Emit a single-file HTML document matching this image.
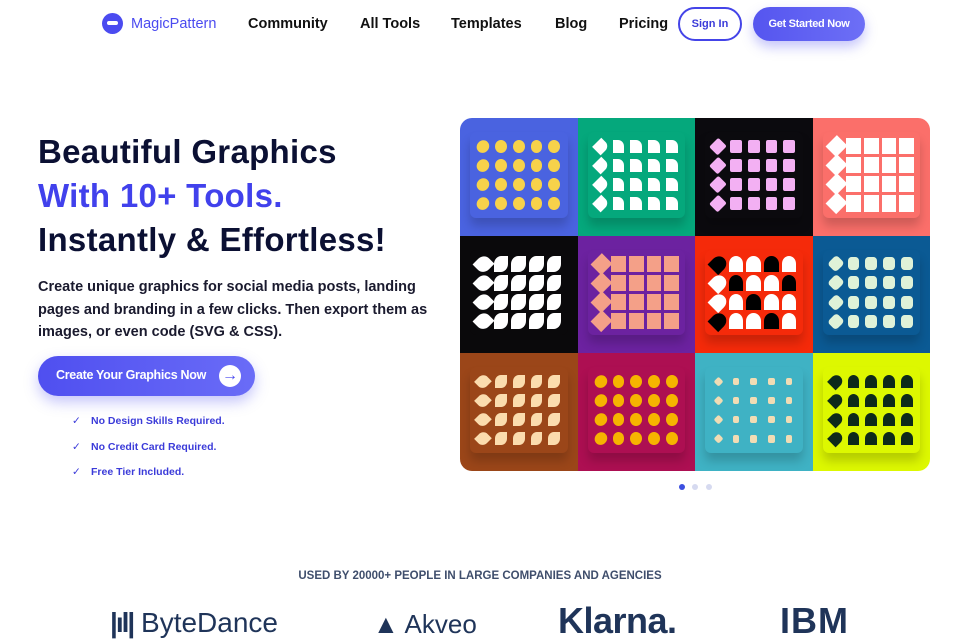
<!DOCTYPE html>
<html><head><meta charset="utf-8"><style>
*{margin:0;padding:0;box-sizing:border-box}
body{width:960px;height:640px;overflow:hidden;background:#fff;font-family:"Liberation Sans",sans-serif;position:relative;color:#0d0c22}
.a{position:absolute}
.nav{font-weight:bold;font-size:14.5px;top:16px;color:#111}
h1{position:absolute;left:38px;top:130px;font-size:33px;line-height:44px;font-weight:bold;color:#0b1033;letter-spacing:.3px}
.p{left:38px;top:276px;width:390px;font-size:14.5px;line-height:22.5px;font-weight:bold;color:#1a1a2e}
.cta{left:38px;top:356px;width:217px;height:40px;border-radius:20px;background:linear-gradient(90deg,#4f4ff0,#6a6cf7);box-shadow:0 6px 14px rgba(90,90,240,.35);color:#fff;font-weight:bold;font-size:12.5px;padding:12px 0 0 18px;letter-spacing:-.3px}
.chk{left:72px;font-size:10.5px;color:#3b3bd9;font-weight:bold}
.chk span{display:inline-block;width:19px;font-weight:normal}
.grid{left:460px;top:118px;width:470px;height:353px;border-radius:12px;overflow:hidden;display:grid;grid-template-columns:repeat(4,1fr);grid-template-rows:repeat(3,1fr)}
.c{position:relative}
.in{position:absolute;left:10px;top:14px;right:10px;bottom:18px;border-radius:6px;box-shadow:0 8px 10px rgba(0,0,0,.18);display:grid;grid-template-columns:repeat(5,1fr);grid-template-rows:repeat(4,1fr);gap:3px;padding:6px}
.in i{display:block}
.logo{font-size:28px;color:#1f3459;top:607px}
</style></head><body>
<div class="a" style="left:102px;top:13px;width:21px;height:21px;border-radius:50%;background:#4b4bf0"></div>
<div class="a" style="left:107px;top:21px;width:11px;height:4px;background:#fff;border-radius:2px"></div>
<div class="a" style="left:131px;top:16px;font-size:14.5px;color:#4b4bf0">MagicPattern</div>
<div class="a nav" style="left:248px">Community</div>
<div class="a nav" style="left:360px">All Tools</div>
<div class="a nav" style="left:451px">Templates</div>
<div class="a nav" style="left:555px">Blog</div>
<div class="a nav" style="left:619px">Pricing</div>
<div class="a" style="left:678px;top:7px;width:64px;height:34px;border:2px solid #4444e8;border-radius:17px;color:#3b3bd9;font-size:11px;font-weight:bold;text-align:center;line-height:30px">Sign In</div>
<div class="a" style="left:753px;top:7px;width:112px;height:34px;border-radius:17px;background:linear-gradient(90deg,#5555ef,#6d6ff6);box-shadow:0 6px 12px rgba(90,90,240,.35);color:#fff;font-size:11px;font-weight:bold;text-align:center;line-height:34px;letter-spacing:-.3px">Get Started Now</div>

<h1>Beautiful Graphics<br><span style="color:#4141ec">With 10+ Tools.</span><br>Instantly &amp; Effortless!</h1>
<div class="a p">Create unique graphics for social media posts, landing pages and branding in a few clicks. Then export them as images, or even code (SVG &amp; CSS).</div>
<div class="a cta">Create Your Graphics Now</div>
<div class="a" style="left:219px;top:365px;width:22px;height:22px;border-radius:50%;background:#fff;color:#4a4af0;font-size:16px;font-weight:bold;text-align:center;line-height:21px">→</div>
<div class="a chk" style="top:415px"><span>✓</span>No Design Skills Required.</div>
<div class="a chk" style="top:441px"><span>✓</span>No Credit Card Required.</div>
<div class="a chk" style="top:466px"><span>✓</span>Free Tier Included.</div>

<div class="a grid">
<div class="c" style="background:#4a63e0"><div class="in" style="background:#4a63e0"></div></div>
<div class="c" style="background:#05a87c"><div class="in" style="background:#05a87c"></div></div>
<div class="c" style="background:#0b0a0e"><div class="in" style="background:#0b0a0e"></div></div>
<div class="c" style="background:#fb6f6a"><div class="in" style="background:#fb6f6a"></div></div>
<div class="c" style="background:#0a090b"><div class="in" style="background:#0a090b;box-shadow:none"></div></div>
<div class="c" style="background:#6c22a0"><div class="in" style="background:#6c22a0"></div></div>
<div class="c" style="background:#f52a0a"><div class="in" style="background:#f52a0a"></div></div>
<div class="c" style="background:#0b5a94"><div class="in" style="background:#0b5a94"></div></div>
<div class="c" style="background:#9b4619"><div class="in" style="background:#9b4619"></div></div>
<div class="c" style="background:#ad0f52"><div class="in" style="background:#ad0f52"></div></div>
<div class="c" style="background:#3fb2c4"><div class="in" style="background:#3fb2c4"></div></div>
<div class="c" style="background:#ddf800"><div class="in" style="background:#ddf800"></div></div>
</div>
<script>
var cfg=[["#f7d24a","50%"],["#fff","0 50% 0 0"],["#f3b0f3","2px"],["#fff","0"],["#fff","50% 0"],["#f4a088","0"],["#fff","50% 50% 0 0"],["#dff2d8","30%"],["#fbdcae","50% 0"],["#f6b400","50%"],["#f1dcb4","2px"],["#0d2a1a","50% 50% 0 0"]];
var ins=document.querySelectorAll('.in');
ins.forEach(function(el,k){var s=cfg[k][0],r=cfg[k][1];
var big=(k==4||k==5||k==6||k==3);
for(var i=0;i<20;i++){var d=document.createElement('i');var sz=big?'100%':(k==10?'45%':'80%');
d.style.cssText='background:'+(k==6&&i%3==0?'#000':s)+';border-radius:'+r+';width:'+sz+';height:'+sz+';margin:auto;'+((i*7)%5==0?'transform:rotate(45deg)':'');el.appendChild(d);}});
</script>
<div class="a" style="left:679px;top:484px;width:6px;height:6px;border-radius:50%;background:#3b4fe0"></div>
<div class="a" style="left:692px;top:484px;width:6px;height:6px;border-radius:50%;background:#d6daf0"></div>
<div class="a" style="left:706px;top:484px;width:6px;height:6px;border-radius:50%;background:#d6daf0"></div>

<div class="a" style="left:0;width:960px;top:570px;text-align:center;font-size:11.5px;font-weight:bold;color:#3f4e6c">USED BY 20000+ PEOPLE IN LARGE COMPANIES AND AGENCIES</div>
<div class="a logo" style="left:110px"><b style="letter-spacing:-2px">|ıl|</b> ByteDance</div>
<div class="a logo" style="left:373px;font-size:26px;top:609px"><b>▲</b> Akveo</div>
<div class="a logo" style="left:558px;font-size:36px;font-weight:bold;top:600px;letter-spacing:-.5px">Klarna.</div>
<div class="a logo" style="left:780px;font-size:36px;font-weight:bold;top:600px;letter-spacing:1px">IBM</div>
</body></html>
